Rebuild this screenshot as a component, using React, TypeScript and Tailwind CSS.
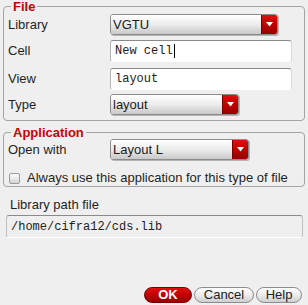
import type { ReactNode } from "react";

const sans = "font-['Liberation_Sans',Arial,sans-serif]";
const mono = "font-['Liberation_Mono','Courier_New',monospace]";

function Combo({ value, width }: { value: string; width: string }) {
	return (
		<div
			className={`${width} flex h-[21px] overflow-hidden rounded-[3px] border border-[#8c8c8c] shadow-[1px_1px_0_#b5b5b5]`}
		>
			<div
				className={`${sans} flex flex-1 items-center bg-gradient-to-b from-[#ffffff] via-[#ececec] to-[#c9c9c9] pl-[2px] text-[13px] text-[#1a1a1a]`}
			>
				{value}
			</div>
			<div className="flex w-[16px] items-center justify-center border-l border-[#7a0000] bg-gradient-to-b from-[#e01010] via-[#c00000] to-[#960000]">
				<svg width="7" height="5" viewBox="0 0 7 5">
					<path d="M0 0h7L3.5 4.5z" fill="#fff" />
				</svg>
			</div>
		</div>
	);
}

function Field({ value, caret, width }: { value: string; caret?: boolean; width: string }) {
	return (
		<div
			className={`${width} ${mono} flex h-[22px] items-center rounded-[3px] border border-t-[#8a8a8a] border-l-[#b4b4b4] border-r-[#d8d8d8] border-b-white bg-white pl-[4px] text-[12px] text-[#222]`}
		>
			{value}
			{caret && <span className="ml-[1px] h-[14px] w-[1px] bg-black" />}
		</div>
	);
}

function Row({ label, children, className }: { label: string; children: ReactNode; className: string }) {
	return (
		<div className={`flex items-center ${className}`}>
			<div className={`${sans} w-[106px] pl-[4px] text-[13px] text-[#1f1f1f]`}>{label}</div>
			{children}
		</div>
	);
}

function Group({ title, children, className }: { title: string; children: ReactNode; className?: string }) {
	return (
		<fieldset className={`mx-[3px] rounded-[4px] border border-[#a4a4a4] ${className ?? ""}`}>
			<legend
				className={`${sans} ml-[7px] px-[2px] text-[13px] leading-[13px] font-bold text-[#cc0000]`}
			>
				{title}
			</legend>
			{children}
		</fieldset>
	);
}

function Button({ label, primary, width }: { label: string; primary?: boolean; width: string }) {
	return (
		<button
			className={`${sans} ${width} h-[16px] rounded-full border text-[13px] leading-[14px] ${
				primary
					? "border-[#7a0000] bg-gradient-to-b from-[#e01010] via-[#c00000] to-[#9a0000] font-bold text-white"
					: "border-[#8c8c8c] bg-gradient-to-b from-[#ffffff] via-[#ececec] to-[#cfcfcf] text-[#222]"
			}`}
		>
			{label}
		</button>
	);
}

function App() {
	return (
		<div className="flex h-[305px] w-[308px] flex-col bg-[#efefef]">
			<Group title="File">
				<Row label="Library" className="mt-[1px] h-[21px]">
					<Combo value="VGTU" width="w-[168px]" />
				</Row>
				<Row label="Cell" className="mt-[5px] h-[22px]">
					<Field value="New cell" caret width="w-[182px]" />
				</Row>
				<Row label="View" className="mt-[6px] h-[22px]">
					<Field value="layout" width="w-[182px]" />
				</Row>
				<Row label="Type" className="mt-[4px] mb-[5px] h-[21px]">
					<Combo value="layout" width="w-[129px]" />
				</Row>
			</Group>

			<Group title="Application" className="mt-[5px]">
				<Row label="Open with" className="h-[21px]">
					<Combo value="Layout L" width="w-[139px]" />
				</Row>
				<div className="mt-[12px] mb-[2px] flex h-[12px] items-center pl-[5px]">
					<span className="h-[11px] w-[11px] rounded-[2px] border border-[#9a9a9a] bg-gradient-to-b from-[#ffffff] to-[#d4d4d4]" />
					<span className={`${sans} ml-[7px] text-[13px] text-[#1f1f1f]`}>
						Always use this application for this type of file
					</span>
				</div>
			</Group>

			<div className={`${sans} mt-[10px] pl-[10px] text-[13px] leading-[15px] text-[#1f1f1f]`}>
				Library path file
			</div>
			<div className="mt-[3px] pl-[6px]">
				<div
					className={`${mono} flex h-[23px] w-[297px] items-center rounded-[3px] border border-t-[#8a8a8a] border-l-[#c0c0c0] border-r-[#c0c0c0] border-b-white bg-[#efefef] pl-[4px] text-[12px] text-[#222]`}
				>
					/home/cifra12/cds.lib
				</div>
			</div>

			<div className="mt-auto mb-[2px] flex justify-end gap-[2px] pr-[6px]">
				<Button label="OK" primary width="w-[48px]" />
				<Button label="Cancel" width="w-[60px]" />
				<Button label="Help" width="w-[46px]" />
			</div>
		</div>
	);
}

export default App;
